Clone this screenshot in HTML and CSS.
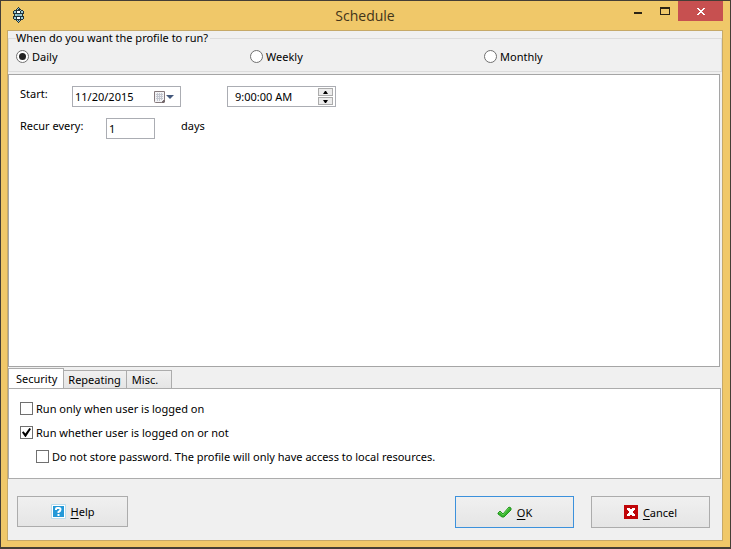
FILE: index.html
```
<!DOCTYPE html>
<html lang="en">
<head>
  <meta charset="utf-8">
  <title>Schedule</title>
  <link rel="stylesheet" href="styles.css">
</head>
<body>
  <form class="window">
    <header class="titlebar">
      <svg class="app-icon" width="13" height="16" viewBox="0 0 13 16" shape-rendering="crispEdges">
        <path d="M6 0h1v1h1v1h1v1h2v1h1v3h-1v2h1v3h-1v1H9v1H8v1H7v1H6v-1H5v-1H4v-1H2v-1H1V9h1V7H1V4h1V3h2V2h1V1h1z" fill="#223239"/>
        <path d="M6 1h1v1H6zM5 2h1v1H5zM8 3h1v1H8zM2 4h2v2H2zM9 4h2v2H9zM3 7h2v2H3zM8 7h2v2H8zM2 10h2v2H2zM9 10h2v2H9zM5 13h1v1H5zM7 13h1v1H7zM6 14h1v1H6z" fill="#9bcbd5"/>
        <path d="M5 7h3v2H5z" fill="#79afbd"/>
        <path d="M5 4h3v2H5zM5 10h3v2H5z" fill="#fff"/>
      </svg>
      <h1 class="title">Schedule</h1>
      <div class="window-buttons">
        <button type="button" class="win-btn" aria-label="Minimize">
          <svg width="8" height="8"><path d="M0 5h8v2H0z" fill="#2b2314"/></svg>
        </button>
        <button type="button" class="win-btn" aria-label="Maximize">
          <svg width="10" height="8" shape-rendering="crispEdges"><path d="M0 0h10v8H0zM1 2v5h8V2z" fill="#2b2314" fill-rule="evenodd"/></svg>
        </button>
        <button type="button" class="win-btn close" aria-label="Close">
          <svg width="8" height="7" viewBox="0 0 8 7" shape-rendering="crispEdges"><path d="M0 0h2v1h1v1h2V1h1V0h2v1H7v1H6v1H5v1h1v1h1v1h1v1H6V6H5V5H3v1H2v1H0V6h1V5h1V4h1V3H2V2H1V1H0z" fill="#fff"/></svg>
        </button>
      </div>
    </header>

    <main class="client">
      <fieldset class="frequency">
        <legend>When do you want the profile to run?</legend>
        <label class="option"><input type="radio" name="frequency" checked>Daily</label>
        <label class="option"><input type="radio" name="frequency">Weekly</label>
        <label class="option"><input type="radio" name="frequency">Monthly</label>
      </fieldset>

      <section class="settings">
        <div class="row">
          <label class="start-label" for="start-date">Start:</label>
          <div class="field">
            <input type="text" id="start-date" value="11/20/2015">
            <button type="button" class="picker" aria-label="Pick a date">
              <svg width="21" height="14" viewBox="0 0 21 14">
                <path d="M1.500 1.500h10v8l-3 3h-6a1 1 0 0 1-1-1z" fill="#f3f3f5" stroke="#85797c"/>
                <path d="M3 4.500h7M3 6.500h7M3 8.500h7M4.500 3v8M6.500 3v8M8.500 3v7" stroke="#c3c6cf"/>
                <path d="M8 13l4-4v3l-1 1z" fill="#75696c"/>
                <path d="M13 5h8l-4 4z" fill="#44587c"/>
              </svg>
            </button>
          </div>
          <div class="field time">
            <input type="text" value="9:00:00 AM" aria-label="Start time">
            <div class="spinner">
              <button type="button" aria-label="Later"><svg width="5" height="3"><path d="M0 3h5L3 0H2z"/></svg></button>
              <button type="button" aria-label="Earlier"><svg width="5" height="3"><path d="M0 0h5L3 3H2z"/></svg></button>
            </div>
          </div>
        </div>
        <div class="row">
          <label class="recur-label" for="recur">Recur every:</label>
          <div class="field days"><input type="text" id="recur" value="1"></div>
          <span>days</span>
        </div>
      </section>

      <nav class="tabs" role="tablist">
        <button type="button" class="tab active" role="tab" aria-selected="true">Security</button>
        <button type="button" class="tab" role="tab">Repeating</button>
        <button type="button" class="tab" role="tab">Misc.</button>
      </nav>
      <section class="tab-panel">
        <label class="option"><input type="checkbox">Run only when user is logged on</label>
        <label class="option"><input type="checkbox" checked>Run whether user is logged on or not</label>
        <label class="option nested"><input type="checkbox">Do not store password. The profile will only have access to local resources.</label>
      </section>

      <footer class="actions">
        <button type="button" class="btn help">
          <svg width="15" height="15" viewBox="0 0 15 15">
            <rect width="15" height="15" rx="1" fill="#b9dcec"/>
            <rect x="1" y="1" width="13" height="13" fill="#fff"/>
            <rect x="2" y="2" width="11" height="11" fill="#2499d8"/>
            <path d="M5 6V5q0-1 1-1h2q1.500 0 1.500 1.500T7.500 8v1" fill="none" stroke="#fff" stroke-width="2"/>
            <path d="M6.500 10h2v2h-2z" fill="#fff"/>
          </svg>
          <span><u>H</u>elp</span>
        </button>
        <button type="submit" class="btn ok">
          <svg width="15" height="13" viewBox="0 0 15 13">
            <path d="M1 7l2-2 3 3 6-7 2 1v2l-7 7H5L1 8z" fill="#36b52c" stroke="#249520"/>
            <path d="M2 7l1-1 3 3 6-7" fill="none" stroke="#65cf55"/>
          </svg>
          <span><u>O</u>K</span>
        </button>
        <button type="button" class="btn">
          <svg width="14" height="14" viewBox="0 0 14 14" shape-rendering="crispEdges">
            <rect width="14" height="14" fill="#c00508"/>
            <path d="M3 3h3v1h2V3h3v2h-1v1H9v2h1v1h1v2H8v-1H6v1H3V9h1V8h1V6H4V5H3z" fill="#fff"/>
          </svg>
          <span><u>C</u>ancel</span>
        </button>
      </footer>
    </main>
  </form>
</body>
</html>
```
FILE: styles.css
```
* {
  box-sizing: border-box;
}
body {
  margin: 0;
  font: 11px/15px "Noto Sans", "Open Sans", sans-serif;
  color: #000;
}
button, input {
  font: inherit;
  color: inherit;
  margin: 0;
  padding: 0;
}
svg {
  display: block;
  flex: none;
}
u {
  text-underline-offset: 2px;
  text-decoration-thickness: 1px;
}

/* window frame */
.window {
  display: flex;
  flex-direction: column;
  min-height: 100vh;
  padding: 0 7px 6px 6px;
  background: #f0c869;
  border: 1px solid #453e36;
  border-bottom-width: 2px;
}
.titlebar {
  display: grid;
  grid-template-columns: 1fr auto 1fr;
  height: 29px;
}
.app-icon {
  margin: 6px 0 0 5px;
}
.title {
  margin: 0;
  font: 14px/29px "Open Sans", sans-serif;
  color: #423419;
}
.window-buttons {
  display: flex;
  justify-content: flex-end;
}
.win-btn {
  display: flex;
  align-items: center;
  justify-content: center;
  width: 27px;
  height: 20px;
  border: 0;
  background: none;
}
.win-btn.close {
  width: 45px;
  background: #c75050;
}

/* dialog content */
.client {
  flex: 1;
  display: flex;
  flex-direction: column;
  background: #f0f0f0;
  border: 1px solid #c6a968;
}
.frequency {
  display: grid;
  grid-template-columns: repeat(3, 1fr);
  height: 41px;
  margin: 0 0 2px;
  padding: 4px 3px 0 7px;
  border: 1px solid #dcdcdc;
}
.frequency legend {
  height: 14px;
  padding: 0 2px 0 0;
  line-height: 14px;
}
.option {
  display: flex;
  align-items: center;
  align-self: start;
  gap: 3px;
}
.option input {
  appearance: none;
  flex: none;
  display: grid;
  place-content: center;
  width: 13px;
  height: 13px;
  background: #fff;
  border: 1px solid #707070;
}
.option input[type=radio] {
  border-radius: 50%;
}
.option input[type=radio]:checked::before {
  content: "";
  width: 7px;
  height: 7px;
  border-radius: 50%;
  background: #222;
}
.option input[type=checkbox]:checked::before {
  content: "";
  width: 9px;
  height: 9px;
  background: #000;
  clip-path: polygon(0 50%, 15% 35%, 38% 60%, 82% 0, 100% 12%, 42% 100%, 35% 100%);
}
.settings {
  flex: 1;
  display: flex;
  flex-direction: column;
  gap: 11px;
  margin-right: 2px;
  padding: 11px;
  background: #fff;
  border: 1px solid #a5a5a5;
}
.row {
  display: flex;
  align-items: flex-start;
}
.start-label {
  width: 52px;
}
.recur-label {
  width: 86px;
}
.field {
  display: flex;
  align-items: center;
  width: 109px;
  height: 21px;
  padding: 0 2px;
  border: 1px solid #abadb3;
  background: #fff;
}
.field input {
  flex: 1;
  min-width: 0;
  border: 0;
  outline: 0;
  background: none;
}
.time {
  margin-left: 46px;
  padding-left: 7px;
}
.days {
  width: 49px;
  margin-right: 26px;
}
.picker {
  margin-right: 4px;
  border: 0;
  background: none;
}
.spinner {
  display: grid;
  gap: 1px;
}
.spinner button {
  display: grid;
  place-content: center;
  width: 15px;
  height: 8px;
  background: #ececec;
  border: 1px solid #acacac;
}

/* tabs */
.tabs {
  display: flex;
  align-items: flex-end;
  margin-top: 1px;
}
.tab {
  height: 18px;
  padding: 0 13px 0 5px;
  background: linear-gradient(#f0f0f0, #e5e5e5);
  border: 1px solid #acacac;
  border-bottom: 0;
}
.tab + .tab + .tab {
  margin-left: -1px;
}
.tab:nth-child(2) {
  padding: 0 5px 0 4px;
  border-left: 0;
}
.tab.active {
  height: 21px;
  margin-bottom: -1px;
  padding: 0 6px 1px 7px;
  background: #fff;
}
.tab-panel {
  display: flex;
  flex-direction: column;
  gap: 9px;
  margin-right: 1px;
  padding: 12px 11px 14px;
  background: #fff;
  border: 1px solid #acacac;
}
.nested {
  margin-left: 16px;
}

/* bottom buttons */
.actions {
  display: flex;
  gap: 17px;
  padding: 17px 12px 12px 9px;
}
.btn {
  display: flex;
  align-items: center;
  justify-content: center;
  gap: 5px;
  width: 119px;
  height: 32px;
  background: linear-gradient(#f0f0f0, #e5e5e5);
  border: 1px solid #acacac;
}
.btn.help {
  width: 111px;
  height: 31px;
  margin-right: auto;
}
.btn.ok {
  border-color: #3c91dc;
}
```
